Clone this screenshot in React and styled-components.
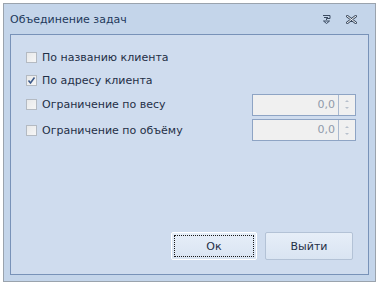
import React from "react";
import styled, { createGlobalStyle } from "styled-components";

const Global = createGlobalStyle`
  html, body { margin: 0; padding: 0; background: #ffffff; }
  body { font-family: "DejaVu Sans", "Liberation Sans", sans-serif; }
`;

const Page = styled.div`
  width: 379px;
  height: 286px;
  padding: 3px;
  box-sizing: border-box;
`;

const Window = styled.div`
  width: 373px;
  height: 279px;
  box-sizing: border-box;
  border: 1px solid #9aa3ad;
  background: #c4d5ea;
  display: flex;
  flex-direction: column;
  padding: 0 6px 6px 6px;
`;

const TitleBar = styled.div`
  height: 30px;
  display: flex;
  align-items: center;
  padding-top: 1px;
  box-sizing: border-box;
`;

const Title = styled.div`
  flex: 1;
  font-size: 11px;
  color: #1e395b;
`;

const TitleIcon = styled.svg`
  display: block;
  margin-right: ${(p) => p.$mr || 0}px;
`;

const Panel = styled.div`
  flex: 1;
  border: 1px solid #7892b8;
  background: #cfdcee;
  display: flex;
  flex-direction: column;
  padding: 11px 12px 14px 15px;
  box-sizing: border-box;
`;

const Row = styled.div`
  display: flex;
  align-items: center;
  height: ${(p) => p.$h || 23}px;
`;

const Check = styled.div`
  width: 11px;
  height: 11px;
  box-sizing: border-box;
  border: 1px solid #b4bac2;
  background: linear-gradient(135deg, #e8e9ea, #f6f6f6);
  display: flex;
  align-items: center;
  justify-content: center;
  margin-right: 5px;
`;

const Label = styled.span`
  flex: 1;
  font-size: 11px;
  color: #1f2f46;
`;

const Spin = styled.div`
  width: 104px;
  height: 22px;
  box-sizing: border-box;
  border: 1px solid #8ea4c4;
  background: #f0f0f0;
  display: flex;
`;

const SpinValue = styled.div`
  flex: 1;
  text-align: right;
  font-size: 11px;
  color: #8f9aab;
  padding-right: 3px;
  line-height: 20px;
`;

const SpinBtns = styled.div`
  width: 16px;
  border-left: 1px solid #a9b9d0;
  display: flex;
  flex-direction: column;
  align-items: center;
  justify-content: center;
  gap: 5px;
`;

const Arrow = styled.div`
  width: 0;
  height: 0;
  border-left: 2px solid transparent;
  border-right: 2px solid transparent;
  ${(p) =>
    p.$up
      ? "border-bottom: 2px solid #b7c0cc;"
      : "border-top: 2px solid #b7c0cc;"}
`;

const Spacer = styled.div`
  flex: 1;
`;

const Buttons = styled.div`
  display: flex;
  justify-content: flex-end;
  gap: 8px;
  margin-right: 3px;
`;

const Button = styled.button`
  width: ${(p) => p.$w}px;
  height: 28px;
  box-sizing: border-box;
  border: 1px solid ${(p) => (p.$focus ? "#ffffff" : "#b3c2d6")};
  border-radius: 2px;
  background: linear-gradient(#e6eef8, #d9e4f2);
  font-family: inherit;
  font-size: 11px;
  color: #1f2f46;
  padding: 0;
  position: relative;
  cursor: default;
  ${(p) =>
    p.$focus
      ? `&::after { content: ""; position: absolute; inset: 2px; border: 1px dotted #1a1a1a; }`
      : ""}
`;

function CheckMark() {
  return (
    <svg width="9" height="9" viewBox="0 0 9 9">
      <path d="M1.5 4.5 L3.5 7 L7.5 1.5" fill="none" stroke="#3d5a8a" strokeWidth="1.6" />
    </svg>
  );
}

function Spinner() {
  return (
    <Spin>
      <SpinValue>0,0</SpinValue>
      <SpinBtns>
        <Arrow $up />
        <Arrow />
      </SpinBtns>
    </Spin>
  );
}

export default function App() {
  return (
    <>
      <Global />
      <Page>
        <Window>
          <TitleBar>
            <Title>Объединение задач</Title>
            <TitleIcon width="9" height="9" viewBox="0 0 9 9" $mr={15}>
              <path d="M1 0.5 H8 V3.5 H4.5 V5 M2 2.5 H6" fill="none" stroke="#3a4a60" strokeWidth="1" />
              <path d="M1.5 6 H7.5 L4.5 8.5 Z" fill="none" stroke="#3a4a60" strokeWidth="1" />
            </TitleIcon>
            <TitleIcon width="11" height="9" viewBox="0 0 11 9" $mr={12}>
              <path d="M1 1 L10 8 M10 1 L1 8" stroke="#3a4a60" strokeWidth="2.6" strokeLinecap="round" />
              <path d="M1 1 L10 8 M10 1 L1 8" stroke="#ffffff" strokeWidth="1" strokeLinecap="round" />
            </TitleIcon>
          </TitleBar>
          <Panel>
            <Row>
              <Check />
              <Label>По названию клиента</Label>
            </Row>
            <Row>
              <Check>
                <CheckMark />
              </Check>
              <Label>По адресу клиента</Label>
            </Row>
            <Row $h={25}>
              <Check />
              <Label>Ограничение по весу</Label>
              <Spinner />
            </Row>
            <Row $h={26}>
              <Check />
              <Label>Ограничение по объёму</Label>
              <Spinner />
            </Row>
            <Spacer />
            <Buttons>
              <Button $w={86} $focus>
                Ок
              </Button>
              <Button $w={88}>Выйти</Button>
            </Buttons>
          </Panel>
        </Window>
      </Page>
    </>
  );
}
